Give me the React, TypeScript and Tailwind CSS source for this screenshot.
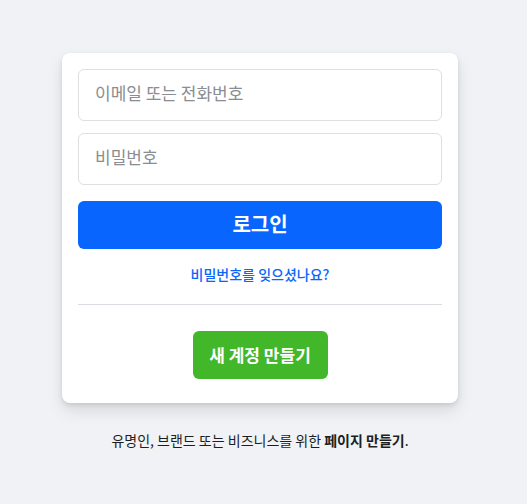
export default function App() {
  return (
    <div
      className="min-h-[504px] w-full bg-[#f0f2f5] flex flex-col items-center pt-[53px] pr-[7px]"
      style={{ fontFamily: '"Noto Sans CJK KR", "Noto Sans", sans-serif' }}
    >
      <div className="w-[396px] bg-white rounded-lg shadow-[0_2px_4px_rgba(0,0,0,0.1),0_8px_16px_rgba(0,0,0,0.1)] p-4 pb-6 flex flex-col">
        <input
          type="text"
          placeholder="이메일 또는 전화번호"
          className="h-[52px] w-full rounded-md border border-[#dddfe2] px-4 pb-[5px] text-[17px] text-[#1c1e21] placeholder:text-[#8a8d91] outline-none"
        />
        <input
          type="password"
          placeholder="비밀번호"
          className="mt-3 h-[52px] w-full rounded-md border border-[#dddfe2] px-4 pb-[5px] text-[17px] text-[#1c1e21] placeholder:text-[#8a8d91] outline-none"
        />
        <button className="mt-4 h-12 w-full rounded-md bg-[#0866ff] text-[20px] font-bold text-white leading-none pb-[2px]">
          로그인
        </button>
        <a className="mt-4 text-center text-sm font-medium leading-[19px] text-[#0866ff]">
          비밀번호를 잊으셨나요?
        </a>
        <div className="mt-5 h-px bg-[#dadde1]" />
        <div className="mt-[26px] flex justify-center">
          <button className="h-12 w-[135px] rounded-md bg-[#42b72a] text-[17px] font-bold text-white leading-none pb-[2px]">
            새 계정 만들기
          </button>
        </div>
      </div>
      <p className="mt-[27px] text-sm text-[#1c1e21]">
        유명인, 브랜드 또는 비즈니스를 위한 <span className="font-bold">페이지 만들기</span>.
      </p>
    </div>
  );
}
